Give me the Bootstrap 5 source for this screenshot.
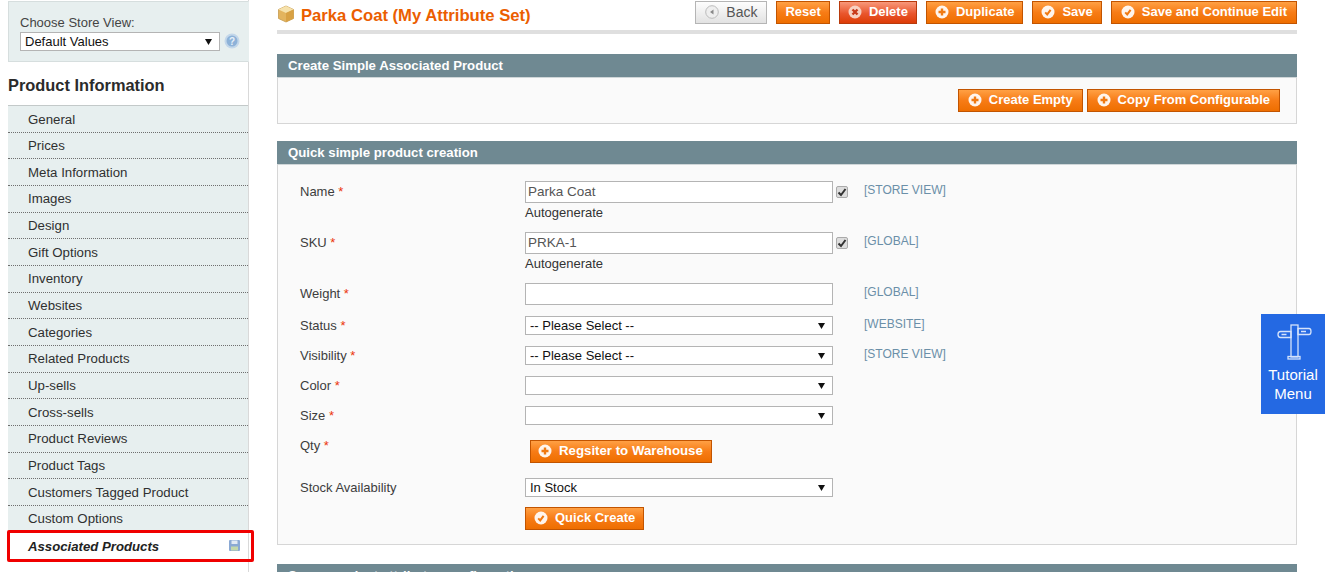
<!DOCTYPE html>
<html lang="en">
<head>
<meta charset="UTF-8" />
<title>Parka Coat (My Attribute Set)</title>
<link rel="stylesheet" href="https://cdn.jsdelivr.net/npm/bootstrap@5.3.0/dist/css/bootstrap.min.css" />
<style>
html, body { height: 100%; overflow: hidden; }
body { font-family: "Liberation Sans", Arial, sans-serif; font-size: 13px; line-height: 16px; color: #2f2f2f; background: #fff; }
.page-wrap { width: 1297px; margin-left: 8px; gap: 28px; }

/* sidebar */
.side-col { width: 241px; flex: none; position: relative; border-right: 1px solid #d9d9d9; min-height: 572px; }
.store-box { margin-top: 1px; height: 61px; padding: 13px 0 0 11px; background: #e7efef; border: 1px solid #d6dede; border-right-color: #e7efef; color: #444; font-size: 13px; margin-right: -1px; }
.store-box .form-select { width: 200px; height: 19px; flex: none; margin-top: 1px; }
.help-dot { width: 16px; height: 16px; flex: none; margin-left: -4px; }
.side-title { height: 44px; padding-top: 12px; margin: 0; font-size: 16.4px; line-height: 22px; font-weight: 700; color: #2b2b2b; border-bottom: 1px solid #c3c9c9; }
.side-list { border-radius: 0; }
.side-list .list-group-item { height: 26.67px; padding: 5.5px 0 0 20px; background: #e7efef; border: 0; border-bottom: 1px dotted #6f6f6f; color: #2f2f2f; border-radius: 0; font-size: 13.25px; line-height: 16px; margin: 0; }
.side-list .list-group-item:nth-last-child(2) { border-bottom: 0; }
.side-list .list-group-item.current-item { background: #fff; border: 0; font-weight: 700; font-style: italic; font-size: 13.2px; color: #222; padding-top: 6.5px; padding-right: 8px; }
.current-item svg { margin-top: 1px; flex: none; }
.red-frame { position: absolute; left: -1px; top: 530px; width: 247px; height: 32px; border: 3px solid #f00000; border-radius: 2px; pointer-events: none; }

/* main */
.main-col { width: 1020px; flex: none; }
.head-row { height: 34px; border-bottom: 4px solid #dfdfdf; padding-top: 1px; margin-bottom: 20px; }
.page-title { font-size: 16.65px; line-height: 20px; font-weight: 700; color: #eb5e00; margin: 5px 0 0 6px; }
.act-btn { height: 23px; padding: 0 8px 1px; border: 1px solid #c25400; border-radius: 0; background: linear-gradient(#ffa044, #f77c16 50%, #ee6e00); color: #fff; font-size: 13px; line-height: 18px; font-weight: 700; gap: 7px; white-space: nowrap; }
.act-btn:hover, .act-btn:active { background: #f77c16; color: #fff; border-color: #c25400; }
.act-btn.red-btn { background: linear-gradient(#f8987a, #e9562d 55%, #dd3c06); border-color: #b83a0c; }
.act-btn.grey-btn { background: linear-gradient(#fdfdfd, #e2e2e2); border-color: #b5b5b5; color: #555; font-weight: 400; font-size: 14px; padding-left: 9px; padding-right: 9px; }
.act-btn svg { width: 14px; height: 14px; flex: none; }
.wide-gap { gap: 9px; }
.wide-pad { padding-left: 9px; padding-right: 9px; }
.act-btn.reg-btn { width: 182px; padding-left: 7px; padding-right: 0; gap: 7px; font-size: 13.25px; }
.box-head { height: 23px; padding: 3px 0 0 11px; background: #6f8992; color: #fff; font-weight: 700; font-size: 13.2px; line-height: 17px; }
.box-body { background: #fafafa; border: 1px solid #d6d6d6; border-top-color: #cfd6d8; }
.box-one { height: 47px; padding: 11px 16px 0 0; margin-bottom: 17px; }
.box-two { height: 381px; padding: 16px 0 0 22px; margin-bottom: 19px; }

.form-line { display: flex; align-items: flex-start; }
.field-label { width: 225px; flex: none; color: #3d3d3d; line-height: 18px; padding-top: 1px; }
.top-label { padding-top: 2px; }
.need { color: #eb340a; }
.field-cell { width: 308px; flex: none; }
.scope-note { color: #6b8fa8; font-size: 12px; line-height: 16px; margin-left: 16px; }
.scope-low { margin-top: 1px; }
.box-two .form-control { height: 22px; padding: 0 2px 2px; border: 1px solid #b4b4b4; border-radius: 0; font-size: 13.5px; line-height: 18px; color: #555; background: #fff; box-shadow: none; }
.form-select { padding: 0 2px 0 4px; border: 1px solid #b4b4b4; border-radius: 0; font-size: 13px; line-height: 16px; color: #111; background-color: #fff; background-image: url("data:image/svg+xml,%3Csvg xmlns='http://www.w3.org/2000/svg' width='7' height='6'%3E%3Cpath d='M0 0h7L3.500 6z' fill='%23111'/%3E%3C/svg%3E"); background-position: right 7px center; background-size: 7px 6px; box-shadow: none; }
.box-two .form-select { height: 19px; }
.chk-wrap { width: 12px; flex: none; margin-left: 3px; }
.form-check-input.gen-chk { width: 12px; height: 12px; margin: 5px 0 0 0; border: 1px solid #aaa; border-radius: 2px; background-color: #ddd; background-image: url("data:image/svg+xml,%3Csvg xmlns='http://www.w3.org/2000/svg' viewBox='0 0 12 12'%3E%3Cpath d='M2.500 6.500l2.500 2.500 4.500-6' fill='none' stroke='%23333' stroke-width='2'/%3E%3C/svg%3E"); background-size: 12px 12px; }
.auto-note { display: block; line-height: 16px; margin-top: 2px; color: #333; font-size: 13px; }
.line-name { height: 51px; }
.line-weight { height: 33px; }
.line-sel { height: 30px; }
.line-qty { height: 42px; }
.line-stock { height: 29px; }
.qty-cell { padding: 4px 0 0 5px; }

.tut-menu { position: fixed; right: 0; top: 314px; width: 64px; height: 100px; background: #2469e3; color: #fff; font-size: 15px; line-height: 19px; text-align: center; padding-top: 9px; }
.tut-menu svg { display: block; margin: 0 0 4px 14px; width: 37px; height: 38px; }
</style>
</head>
<body>

<svg width="0" height="0" class="position-absolute">
  <symbol id="ic-plus" viewBox="0 0 14 14"><circle cx="7" cy="7" r="6.500" fill="#fff" opacity=".92"/><path d="M7 3.500v7M3.500 7h7" stroke="#f07a12" stroke-width="2.400"/></symbol>
  <symbol id="ic-check" viewBox="0 0 14 14"><circle cx="7" cy="7" r="6.500" fill="#fff" opacity=".92"/><path d="M4.200 7.400l2 2 3.400-4.600" fill="none" stroke="#f07a12" stroke-width="2"/></symbol>
</svg>

<div class="page-wrap d-flex">
  <div class="side-col">
    <div class="store-box">
      <div>Choose Store View:</div>
      <div class="d-flex align-items-center gap-2">
        <select class="form-select"><option>Default Values</option></select>
        <svg class="help-dot" viewBox="0 0 16 16"><circle cx="8" cy="8" r="7.500" fill="#c3d7ea"/><circle cx="8" cy="8" r="5.500" fill="#8db2d8"/><text x="8" y="11.500" text-anchor="middle" font-size="10" font-weight="700" fill="#e6f0fa" font-family="Liberation Sans">?</text></svg>
      </div>
    </div>
    <h2 class="side-title">Product Information</h2>
    <div class="list-group side-list">
      <a class="list-group-item">General</a>
      <a class="list-group-item">Prices</a>
      <a class="list-group-item">Meta Information</a>
      <a class="list-group-item">Images</a>
      <a class="list-group-item">Design</a>
      <a class="list-group-item">Gift Options</a>
      <a class="list-group-item">Inventory</a>
      <a class="list-group-item">Websites</a>
      <a class="list-group-item">Categories</a>
      <a class="list-group-item">Related Products</a>
      <a class="list-group-item">Up-sells</a>
      <a class="list-group-item">Cross-sells</a>
      <a class="list-group-item">Product Reviews</a>
      <a class="list-group-item">Product Tags</a>
      <a class="list-group-item">Customers Tagged Product</a>
      <a class="list-group-item">Custom Options</a>
      <a class="list-group-item current-item d-flex justify-content-between">
        <span>Associated Products</span>
        <svg width="11" height="11" viewBox="0 0 11 11"><rect width="11" height="11" rx="1" fill="#8aa9d4"/><rect x="2.500" y="0.500" width="6" height="3.500" fill="#e2eaf4"/><rect x="2" y="6.500" width="7" height="4" fill="#c3d8ab"/></svg>
      </a>
    </div>
    <div class="red-frame"></div>
  </div>

  <div class="main-col">
    <div class="head-row d-flex justify-content-between">
      <div class="d-flex">
        <svg width="18" height="18" viewBox="0 0 18 18" class="mt-1 flex-shrink-0"><path d="M9 1l7.500 3.500v9L9 17l-7.500-3.500v-9z" fill="#e3b45e" stroke="#c59a4e" stroke-width=".8"/><path d="M9 1l7.500 3.500L9 8 1.500 4.500z" fill="#f6e2ac"/><path d="M9 8v9l7.500-3.500v-9z" fill="#d8a144"/></svg>
        <h1 class="page-title">Parka Coat (My Attribute Set)</h1>
      </div>
      <div class="d-flex wide-gap">
        <button class="btn act-btn grey-btn d-flex align-items-center"><svg viewBox="0 0 14 14"><circle cx="7" cy="7" r="6.300" fill="#eee" stroke="#bbb"/><path d="M8.500 4.500v5L5 7z" fill="#888"/></svg>Back</button>
        <button class="btn act-btn d-flex align-items-center">Reset</button>
        <button class="btn act-btn red-btn d-flex align-items-center"><svg viewBox="0 0 14 14"><circle cx="7" cy="7" r="6.500" fill="#f7d0c2"/><path d="M4.500 4.500l5 5M9.500 4.500l-5 5" stroke="#c8391a" stroke-width="2.400"/></svg>Delete</button>
        <button class="btn act-btn d-flex align-items-center"><svg><use href="#ic-plus"/></svg>Duplicate</button>
        <button class="btn act-btn d-flex align-items-center"><svg><use href="#ic-check"/></svg>Save</button>
        <button class="btn act-btn wide-pad d-flex align-items-center"><svg><use href="#ic-check"/></svg>Save and Continue Edit</button>
      </div>
    </div>

    <div class="box-head">Create Simple Associated Product</div>
    <div class="box-body box-one d-flex justify-content-end gap-1">
      <button class="btn act-btn wide-pad d-flex align-items-center"><svg><use href="#ic-plus"/></svg>Create Empty</button>
      <button class="btn act-btn wide-pad d-flex align-items-center"><svg><use href="#ic-plus"/></svg>Copy From Configurable</button>
    </div>

    <div class="box-head">Quick simple product creation</div>
    <div class="box-body box-two">
      <div class="form-line line-name">
        <div class="field-label top-label">Name <span class="need">*</span></div>
        <div class="field-cell"><input class="form-control" value="Parka Coat" /><span class="auto-note">Autogenerate</span></div>
        <div class="chk-wrap"><input class="form-check-input gen-chk" type="checkbox" checked /></div>
        <div class="scope-note scope-low">[STORE VIEW]</div>
      </div>
      <div class="form-line line-name">
        <div class="field-label top-label">SKU <span class="need">*</span></div>
        <div class="field-cell"><input class="form-control" value="PRKA-1" /><span class="auto-note">Autogenerate</span></div>
        <div class="chk-wrap"><input class="form-check-input gen-chk" type="checkbox" checked /></div>
        <div class="scope-note scope-low">[GLOBAL]</div>
      </div>
      <div class="form-line line-weight">
        <div class="field-label top-label">Weight <span class="need">*</span></div>
        <div class="field-cell"><input class="form-control" /></div>
        <div class="chk-wrap"></div>
        <div class="scope-note scope-low">[GLOBAL]</div>
      </div>
      <div class="form-line line-sel">
        <div class="field-label">Status <span class="need">*</span></div>
        <div class="field-cell"><select class="form-select"><option>-- Please Select --</option></select></div>
        <div class="chk-wrap"></div>
        <div class="scope-note">[WEBSITE]</div>
      </div>
      <div class="form-line line-sel">
        <div class="field-label">Visibility <span class="need">*</span></div>
        <div class="field-cell"><select class="form-select"><option>-- Please Select --</option></select></div>
        <div class="chk-wrap"></div>
        <div class="scope-note">[STORE VIEW]</div>
      </div>
      <div class="form-line line-sel">
        <div class="field-label">Color <span class="need">*</span></div>
        <div class="field-cell"><select class="form-select"><option></option></select></div>
      </div>
      <div class="form-line line-sel">
        <div class="field-label">Size <span class="need">*</span></div>
        <div class="field-cell"><select class="form-select"><option></option></select></div>
      </div>
      <div class="form-line line-qty">
        <div class="field-label">Qty <span class="need">*</span></div>
        <div class="field-cell qty-cell"><button class="btn act-btn reg-btn d-inline-flex align-items-center"><svg><use href="#ic-plus"/></svg>Regsiter to Warehouse</button></div>
      </div>
      <div class="form-line line-stock">
        <div class="field-label">Stock Availability</div>
        <div class="field-cell"><select class="form-select"><option>In Stock</option></select></div>
      </div>
      <div class="form-line">
        <div class="field-label"></div>
        <div class="field-cell"><button class="btn act-btn d-inline-flex align-items-center"><svg><use href="#ic-check"/></svg>Quick Create</button></div>
      </div>
    </div>

    <div class="box-head">Super product attributes configuration</div>
  </div>
</div>

<div class="tut-menu">
  <svg viewBox="0 0 37 38" fill="none" stroke="#d5e3fb" stroke-width="1.300"><rect x="16" y="2" width="7" height="32"/><rect x="13" y="33.500" width="12" height="2.500"/><path d="M16 8.500H5.500Q3 8.500 3 11.500Q3 14.500 5.500 14.500H16z"/><path d="M23 5.500H34Q36 5.500 36 8.500Q36 11.500 34 11.500H23z"/><path d="M6.500 11.500h5M26 8.500h5"/></svg>
  Tutorial<br />Menu
</div>

</body>
</html>
